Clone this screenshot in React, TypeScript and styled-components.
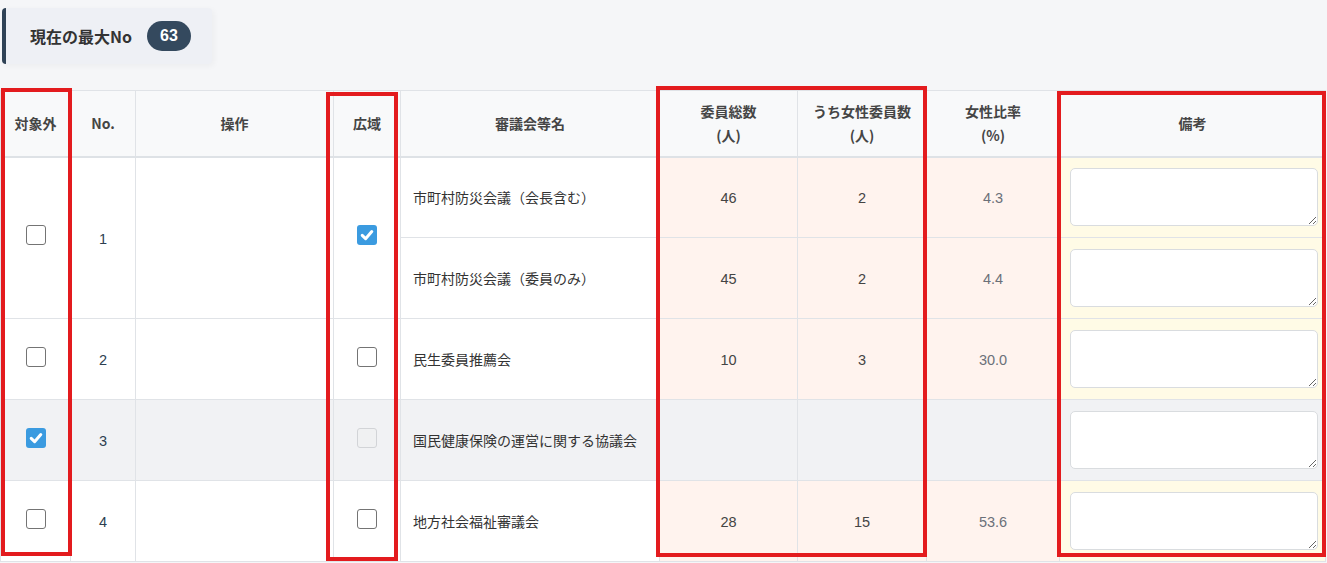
import React from "react";
import styled, { createGlobalStyle } from "styled-components";

const GlobalStyle = createGlobalStyle`
  html, body {
    margin: 0;
    padding: 0;
    background: #f5f6f8;
  }
  body {
    font-family: "Liberation Sans", "Noto Sans CJK JP", sans-serif;
    color: #333;
  }
  * { box-sizing: border-box; }
`;

const Page = styled.div`
  padding-top: 8px;
`;

const MaxNoBar = styled.div`
  margin-left: 2px;
  width: 210px;
  height: 56px;
  display: flex;
  align-items: center;
  gap: 15px;
  padding-left: 24px;
  background: #eef0f5;
  border-left: 4px solid #2f4256;
  border-radius: 4px;
  box-shadow: 2px 2px 6px rgba(0, 0, 0, 0.04);
`;

const MaxNoLabel = styled.span`
  font-family: "Noto Sans CJK JP", sans-serif;
  font-size: 16px;
  font-weight: 700;
  color: #333;
`;

const MaxNoPill = styled.span`
  display: inline-flex;
  align-items: center;
  justify-content: center;
  width: 44px;
  height: 30px;
  border-radius: 15px;
  background: #34495e;
  color: #fff;
  font-size: 16px;
  font-weight: 700;
`;

const TableWrap = styled.div`
  position: relative;
  margin-top: 26px;
  width: 1325px;
`;

const Table = styled.table`
  width: 1325px;
  table-layout: fixed;
  border-collapse: collapse;
  background: #fff;
`;

const HeadCell = styled.th`
  height: 66px;
  padding: 0 6px;
  background: #f8f9fa;
  border: 1px solid #e0e3e7;
  border-bottom: 2px solid #dee2e6;
  font-family: "Noto Sans CJK JP", sans-serif;
  font-size: 14px;
  font-weight: 700;
  line-height: 24px;
  color: #454545;
  text-align: center;
  vertical-align: middle;
`;

type Tone = "plain" | "count" | "note";

const toneBg: Record<Tone, string> = {
  plain: "#ffffff",
  count: "#fff3ee",
  note: "#fffbe6",
};

const Cell = styled.td<{ $tone?: Tone; $muted?: boolean; $align?: "left" | "center"; $ink?: string }>`
  height: 81px;
  padding: ${(p) => (p.$tone === "note" ? "0 7px 0 10px" : p.$align === "left" ? "0 0 0 12px" : "0")};
  border: 1px solid #e0e3e7;
  background: ${(p) => (p.$muted ? "#f1f2f4" : toneBg[p.$tone ?? "plain"])};
  font-family: "Noto Sans CJK JP", sans-serif;
  font-size: 14px;
  color: ${(p) => p.$ink ?? "#333"};
  text-align: ${(p) => p.$align ?? "center"};
  vertical-align: middle;
`;

const Figure = styled.span`
  font-family: "Liberation Sans", sans-serif;
  font-size: 14.5px;
`;

const CheckBox = styled.span<{ $checked?: boolean; $disabled?: boolean }>`
  display: flex;
  align-items: center;
  justify-content: center;
  width: 20px;
  height: 20px;
  margin: -5px auto 0;
  border-radius: 3px;
  border: ${(p) =>
    p.$checked ? "none" : p.$disabled ? "1.5px solid #d2d4d7" : "1.5px solid #747474"};
  background: ${(p) => (p.$checked ? "#3b9be0" : p.$disabled ? "#f0f1f2" : "#fff")};
`;

const NoteInput = styled.textarea`
  display: block;
  width: 100%;
  height: 58px;
  margin: 0;
  border: 1px solid #d9dcdf;
  border-radius: 5px;
  background: #fff;
  resize: vertical;
  font-family: "Noto Sans CJK JP", sans-serif;
  font-size: 14px;
`;

const Highlight = styled.div`
  position: absolute;
  border: 4px solid #e31b1e;
  pointer-events: none;
`;

function Check({ checked, disabled }: { checked?: boolean; disabled?: boolean }) {
  return (
    <CheckBox $checked={checked} $disabled={disabled}>
      {checked && (
        <svg width="20" height="20" viewBox="0 0 20 20">
          <path
            d="M5.2 10.4 L8.6 13.7 L14.8 6.6"
            fill="none"
            stroke="#fff"
            strokeWidth="3"
            strokeLinecap="round"
            strokeLinejoin="round"
          />
        </svg>
      )}
    </CheckBox>
  );
}

type Council = { name: string; total?: number; women?: number; ratio?: string };
type Entry = { no: number; excluded: boolean; wide: boolean; councils: Council[] };

const entries: Entry[] = [
  {
    no: 1,
    excluded: false,
    wide: true,
    councils: [
      { name: "市町村防災会議（会長含む）", total: 46, women: 2, ratio: "4.3" },
      { name: "市町村防災会議（委員のみ）", total: 45, women: 2, ratio: "4.4" },
    ],
  },
  { no: 2, excluded: false, wide: false, councils: [{ name: "民生委員推薦会", total: 10, women: 3, ratio: "30.0" }] },
  { no: 3, excluded: true, wide: false, councils: [{ name: "国民健康保険の運営に関する協議会" }] },
  { no: 4, excluded: false, wide: false, councils: [{ name: "地方社会福祉審議会", total: 28, women: 15, ratio: "53.6" }] },
];

const widths = [70, 65, 198, 67, 259, 138, 129, 133, 266];

export default function App() {
  return (
    <Page>
      <GlobalStyle />
      <MaxNoBar>
        <MaxNoLabel>現在の最大No</MaxNoLabel>
        <MaxNoPill>63</MaxNoPill>
      </MaxNoBar>

      <TableWrap>
        <Table>
          <colgroup>
            {widths.map((w, i) => (
              <col key={i} style={{ width: w }} />
            ))}
          </colgroup>
          <thead>
            <tr>
              <HeadCell>対象外</HeadCell>
              <HeadCell>No.</HeadCell>
              <HeadCell>操作</HeadCell>
              <HeadCell>広域</HeadCell>
              <HeadCell>審議会等名</HeadCell>
              <HeadCell>
                委員総数
                <br />
                (人)
              </HeadCell>
              <HeadCell>
                うち女性委員数
                <br />
                (人)
              </HeadCell>
              <HeadCell>
                女性比率
                <br />
                (%)
              </HeadCell>
              <HeadCell>備考</HeadCell>
            </tr>
          </thead>
          <tbody>
            {entries.map((e) =>
              e.councils.map((c, ci) => (
                <tr key={`${e.no}-${ci}`}>
                  {ci === 0 && (
                    <>
                      <Cell rowSpan={e.councils.length} $muted={e.excluded}>
                        <Check checked={e.excluded} />
                      </Cell>
                      <Cell rowSpan={e.councils.length} $muted={e.excluded} $ink="#2c3e50">
                        <Figure>{e.no}</Figure>
                      </Cell>
                      <Cell rowSpan={e.councils.length} $muted={e.excluded} />
                      <Cell rowSpan={e.councils.length} $muted={e.excluded}>
                        <Check checked={e.wide} disabled={e.excluded} />
                      </Cell>
                    </>
                  )}
                  <Cell $muted={e.excluded} $align="left">
                    {c.name}
                  </Cell>
                  <Cell $tone="count" $muted={e.excluded} $ink="#444">
                    <Figure>{c.total}</Figure>
                  </Cell>
                  <Cell $tone="count" $muted={e.excluded} $ink="#444">
                    <Figure>{c.women}</Figure>
                  </Cell>
                  <Cell $tone="count" $muted={e.excluded} $ink="#6b7079">
                    <Figure>{c.ratio}</Figure>
                  </Cell>
                  <Cell $tone="note" $muted={e.excluded}>
                    <NoteInput />
                  </Cell>
                </tr>
              ))
            )}
          </tbody>
        </Table>

        <Highlight style={{ left: 1, top: -2, width: 71, height: 468 }} />
        <Highlight style={{ left: 326, top: 2, width: 72, height: 469 }} />
        <Highlight style={{ left: 656, top: -4, width: 271, height: 471 }} />
        <Highlight style={{ left: 1057, top: 1, width: 269, height: 466 }} />
      </TableWrap>
    </Page>
  );
}
